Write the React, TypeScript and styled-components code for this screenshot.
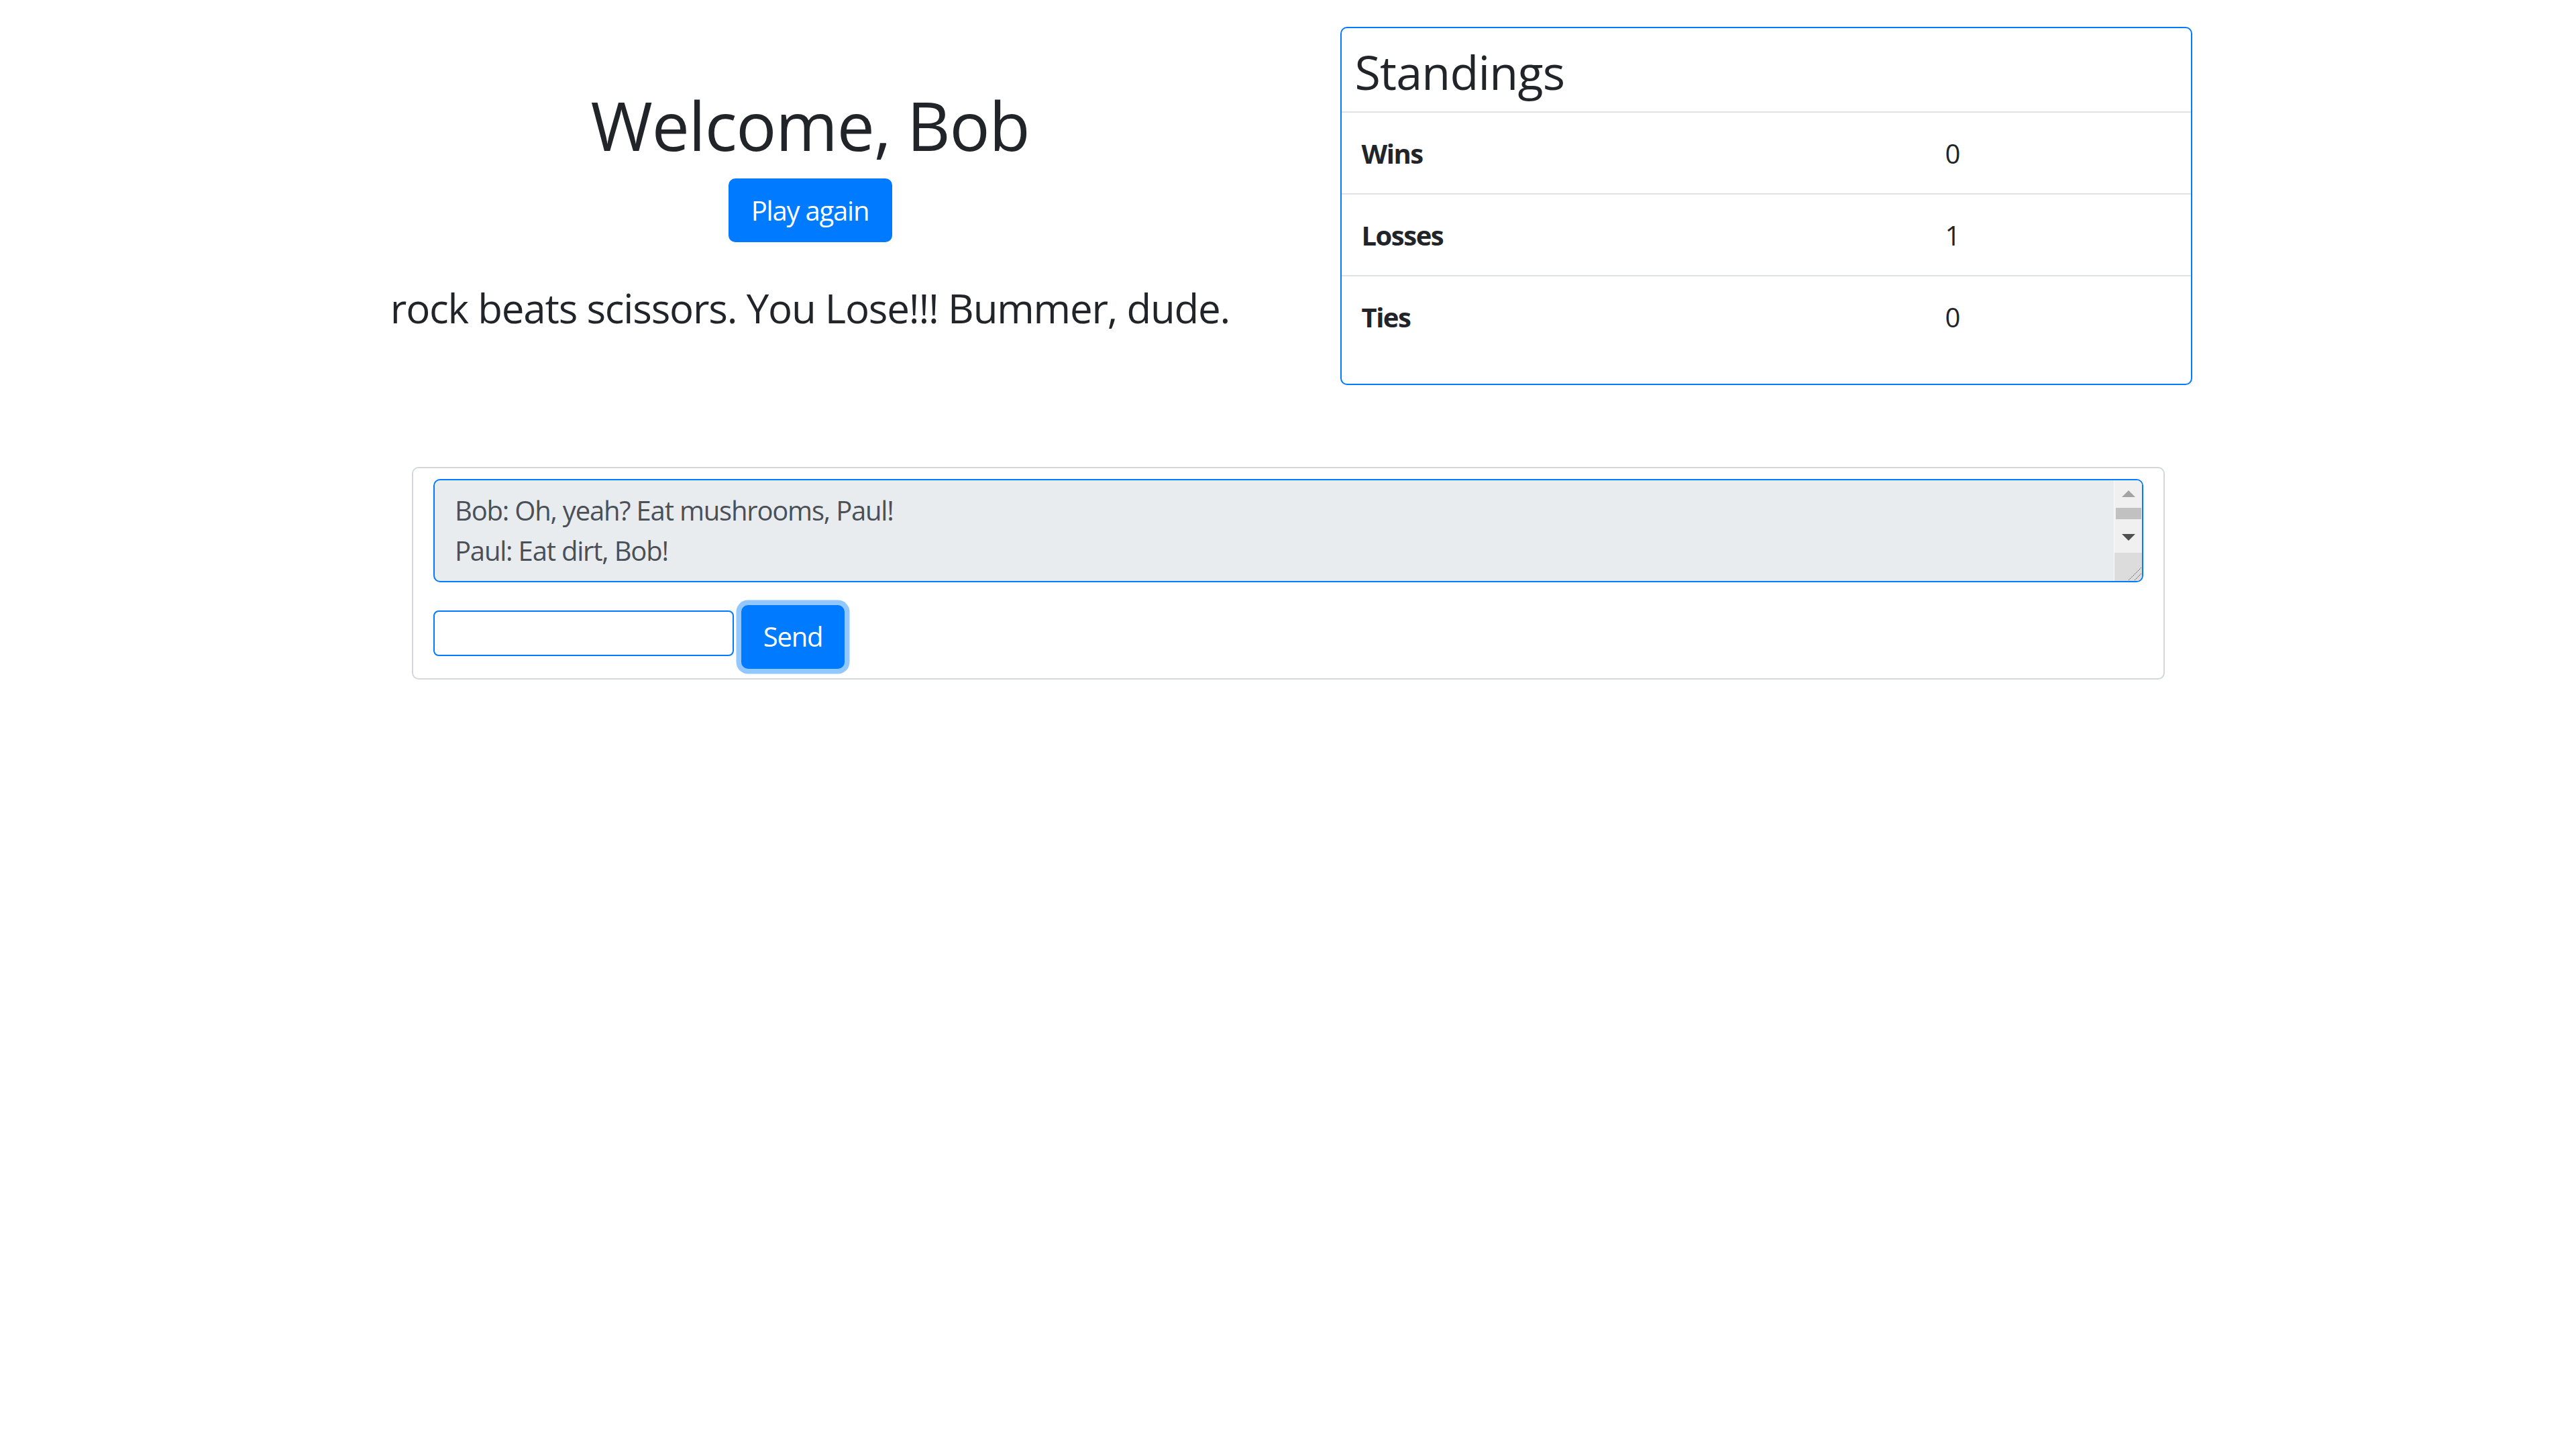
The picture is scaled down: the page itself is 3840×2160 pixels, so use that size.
import React from "react";
import styled, { createGlobalStyle } from "styled-components";

const Global = createGlobalStyle`
  html, body { margin: 0; padding: 0; background: #ffffff; }
  body {
    font-family: "Open Sans", "Noto Sans", "Liberation Sans", sans-serif;
    color: #212529;
    font-size: 40px;
    line-height: 1.5;
    letter-spacing: -1.2px;
  }
  * { box-sizing: border-box; }
`;

const Container = styled.div`
  width: 2850px;
  margin: 0 auto;
`;

const TopRow = styled.div`
  display: grid;
  grid-template-columns: 1fr 1fr;
`;

const Col = styled.div<{ $padTop?: number }>`
  padding: ${(p) => p.$padTop ?? 0}px 37.5px 0;
`;

const WelcomeCol = styled(Col)`
  text-align: center;
`;

const Title = styled.h1`
  font-size: 100px;
  font-weight: 400;
  line-height: 1.2;
  margin: 0 0 20px;
`;

const PrimaryButton = styled.button<{ $focused?: boolean; $width: number }>`
  display: inline-flex;
  align-items: center;
  justify-content: center;
  width: ${(p) => p.$width}px;
  height: 95px;
  padding: 0;
  border: 2.5px solid #007bff;
  border-radius: 10px;
  background: #007bff;
  color: #ffffff;
  font-family: inherit;
  font-size: 40px;
  letter-spacing: -1.2px;
  line-height: 60px;
  cursor: pointer;
  box-shadow: ${(p) => (p.$focused ? "0 0 0 7.5px rgba(38, 143, 255, 0.5)" : "none")};
`;

const Result = styled.h4`
  font-size: 60px;
  font-weight: 400;
  line-height: 1.2;
  margin: 62px 0 0;
`;

const Card = styled.div`
  margin: 40px;
  border: 2.5px solid #007bff;
  border-radius: 10px;
  padding-bottom: 40px;
`;

const CardTitle = styled.h3`
  font-size: 70px;
  font-weight: 400;
  line-height: 1.2;
  letter-spacing: -0.8px;
  margin: 0;
  padding: 23px 20px 17px;
`;

const StatRow = styled.div`
  display: grid;
  grid-template-columns: 870px 1fr;
  border-top: 2.5px solid #dee2e6;
`;

const StatCell = styled.div<{ $head?: boolean }>`
  padding: 31px 30px 29px;
  font-size: 40px;
  line-height: 60px;
  font-weight: ${(p) => (p.$head ? 700 : 400)};
  letter-spacing: ${(p) => (p.$head ? "-1.5px" : "-1.2px")};
`;

const ChatPanel = styled.div`
  margin: 82px 118px 0 119px;
  border: 2.5px solid #d3d7dc;
  border-radius: 10px;
  padding: 15.5px 30px 14.5px;
`;

const ChatLog = styled.div`
  display: flex;
  height: 154px;
  border: 2.5px solid #007bff;
  border-radius: 10px;
  background: #e9ecef;
  overflow: hidden;
`;

const ChatText = styled.div`
  flex: 1;
  padding: 15px 30px;
  color: #495057;
  font-size: 40px;
  line-height: 60px;
`;

const ScrollBar = styled.div`
  width: 42px;
  display: flex;
  flex-direction: column;
  border-left: 1.5px solid #f8f9fa;
`;

const ScrollTrack = styled.div`
  flex: 1;
  background: #f0f0f0;
  display: flex;
  flex-direction: column;
`;

const ScrollArrow = styled.div`
  height: 41px;
  display: flex;
  align-items: center;
  justify-content: center;
`;

const ScrollGap = styled.div<{ $h: number }>`
  height: ${(p) => p.$h}px;
`;

const ScrollThumb = styled.div`
  height: 17px;
  margin: 0 1px 0 2px;
  background: #c1c1c1;
`;

const ResizeCorner = styled.div`
  height: 42px;
  background: #dcdcdc;
  display: flex;
  align-items: flex-end;
  justify-content: flex-end;
`;

const SendRow = styled.div`
  display: flex;
  align-items: flex-start;
  gap: 11px;
  margin-top: 34px;
`;

const MessageInput = styled.input`
  width: 448px;
  height: 68px;
  margin-top: 8px;
  border: 2.5px solid #007bff;
  border-radius: 8px;
  background: #ffffff;
  font-family: inherit;
  font-size: 40px;
  padding: 0 8px;
  outline: none;
`;

const Triangle = ({ up, color }: { up: boolean; color: string }) => (
  <svg width="20" height="10" viewBox="0 0 20 10">
    <polygon points={up ? "10,0 20,10 0,10" : "0,0 20,0 10,10"} fill={color} />
  </svg>
);

const Grip = () => (
  <svg width="22" height="22" viewBox="0 0 22 22">
    <line x1="2" y1="21" x2="21" y2="2" stroke="#555" strokeWidth="1" strokeDasharray="1.5 1" />
    <line x1="11" y1="21" x2="21" y2="11" stroke="#555" strokeWidth="1" strokeDasharray="1.5 1" />
  </svg>
);

const standings = [
  { label: "Wins", value: 0 },
  { label: "Losses", value: 1 },
  { label: "Ties", value: 0 },
];

const messages = ["Bob: Oh, yeah? Eat mushrooms, Paul!", "Paul: Eat dirt, Bob!"];

export default function App() {
  return (
    <>
      <Global />
      <Container>
        <TopRow>
          <WelcomeCol $padTop={126}>
            <Title>Welcome, Bob</Title>
            <PrimaryButton $width={244}>Play again</PrimaryButton>
            <Result>rock beats scissors. You Lose!!! Bummer, dude.</Result>
          </WelcomeCol>
          <Col>
            <Card>
              <CardTitle>Standings</CardTitle>
              {standings.map((s) => (
                <StatRow key={s.label}>
                  <StatCell $head>{s.label}</StatCell>
                  <StatCell>{s.value}</StatCell>
                </StatRow>
              ))}
            </Card>
          </Col>
        </TopRow>
        <ChatPanel>
          <ChatLog>
            <ChatText>
              {messages.map((m) => (
                <div key={m}>{m}</div>
              ))}
            </ChatText>
            <ScrollBar>
              <ScrollTrack>
                <ScrollArrow>
                  <Triangle up color="#a3a3a3" />
                </ScrollArrow>
                <ScrollThumb />
                <ScrollGap $h={7} />
                <ScrollArrow>
                  <Triangle up={false} color="#505050" />
                </ScrollArrow>
              </ScrollTrack>
              <ResizeCorner>
                <Grip />
              </ResizeCorner>
            </ScrollBar>
          </ChatLog>
          <SendRow>
            <MessageInput type="text" />
            <PrimaryButton $focused $width={154}>
              Send
            </PrimaryButton>
          </SendRow>
        </ChatPanel>
      </Container>
    </>
  );
}
